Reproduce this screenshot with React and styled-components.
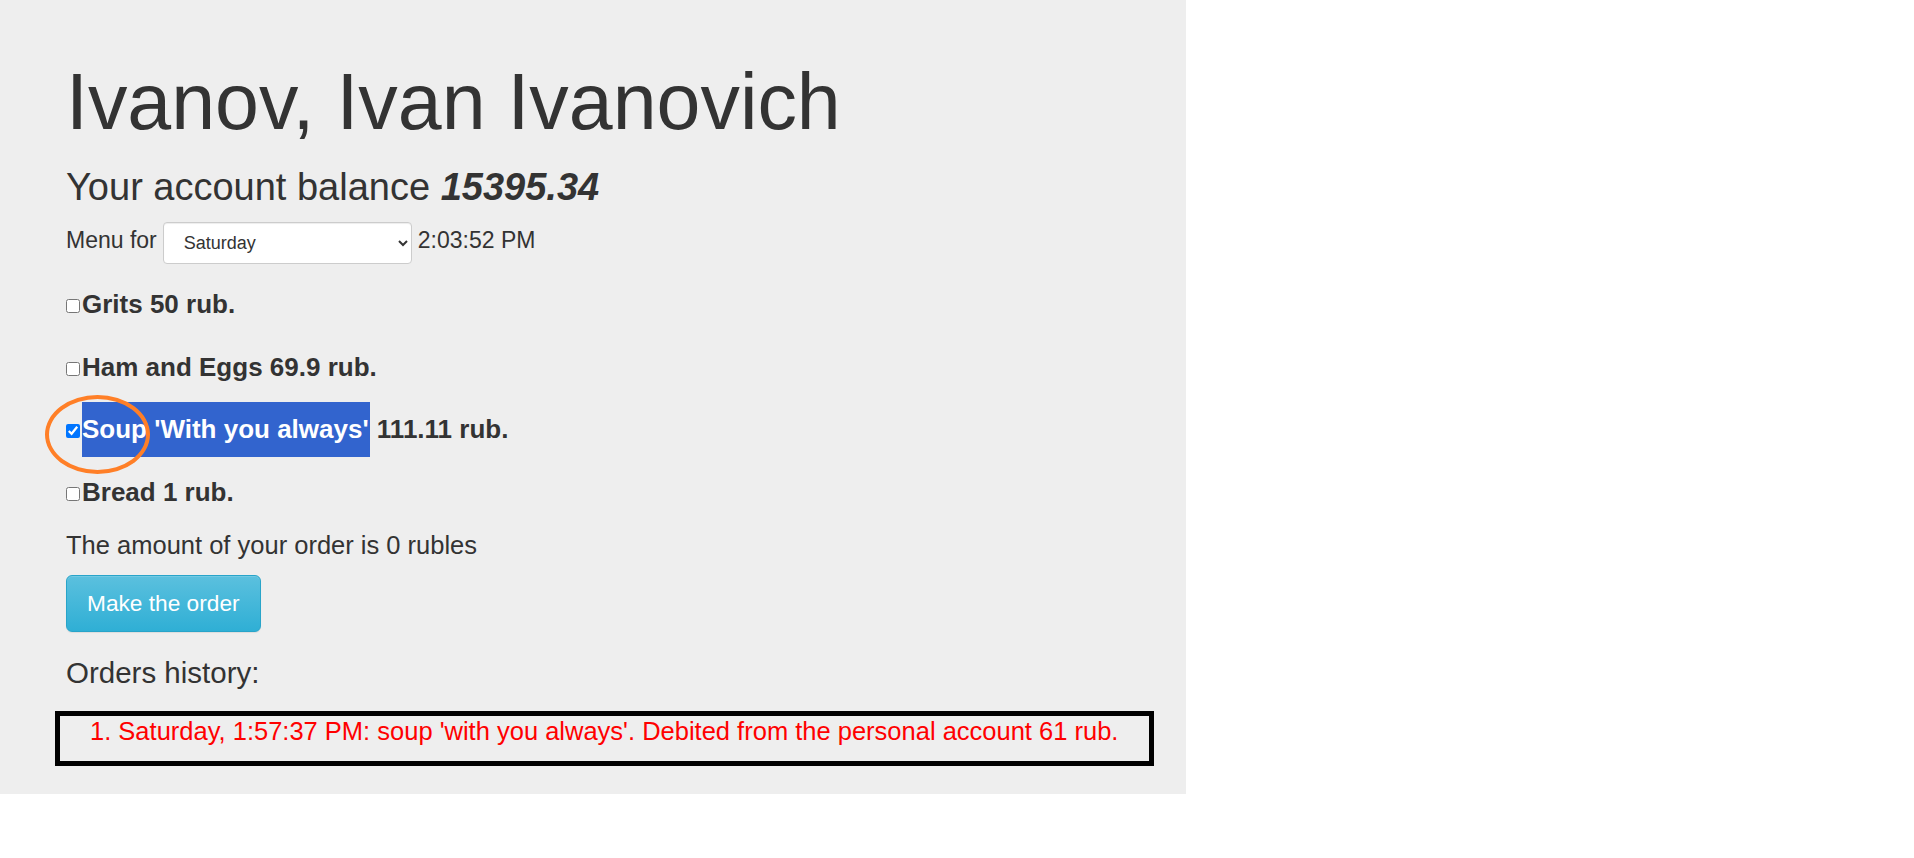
import styled, { createGlobalStyle } from 'styled-components';

const GlobalStyle = createGlobalStyle`
  html, body {
    margin: 0;
    padding: 0;
    background: #fff;
  }
  body {
    font-family: "Liberation Sans", Arial, Helvetica, sans-serif;
    color: #333;
  }
`;

const Page = styled.div`
  width: 1186px;
  min-height: 794px;
  box-sizing: border-box;
  background: #eee;
  padding: 59px 32px 28px 66px;
  display: flex;
  flex-direction: column;
`;

const Title = styled.h1`
  margin: 0;
  font-size: 78.9px;
  line-height: 86px;
  font-weight: 400;
`;

const Balance = styled.h3`
  margin: 21px 0 0;
  font-size: 38px;
  line-height: 42px;
  font-weight: 400;

  b {
    font-style: italic;
    font-weight: 700;
  }
`;

const MenuRow = styled.div`
  margin-top: 14px;
  display: flex;
  align-items: flex-start;
  font-size: 23px;
`;

const RowText = styled.span`
  margin-top: 3px;
  line-height: 30px;
  margin-left: ${p => p.$gap || 0}px;
`;

const DaySelect = styled.select`
  margin-left: 6px;
  width: 249px;
  height: 42px;
  box-sizing: border-box;
  padding: 0 6px 0 16px;
  font-family: "Liberation Sans", Arial, sans-serif;
  font-size: 18px;
  color: #333;
  background: #fff;
  border: 1px solid #ccc;
  border-radius: 4px;
  box-shadow: inset 0 1px 1px rgba(0, 0, 0, 0.075);
`;

const Items = styled.div`
  margin-top: 13px;
  display: flex;
  flex-direction: column;
`;

const Item = styled.div`
  position: relative;
  line-height: 55px;
  height: 55px;
  margin-bottom: 7.5px;
  font-size: 26px;
  font-weight: 700;
  white-space: nowrap;
`;

const Check = styled.input`
  width: 14px;
  height: 14px;
  margin: 0 2px 1px 0;
  vertical-align: baseline;
`;

const Selected = styled.span`
  display: inline-block;
  line-height: 55px;
  padding-right: 1px;
  background: #3264ce;
  color: #fff;
`;

// hand-drawn annotation ring over the checked item
const Circle = styled.span`
  position: absolute;
  left: -21px;
  top: -7px;
  width: 105px;
  height: 79px;
  box-sizing: border-box;
  border: 4px solid #ff7f27;
  border-radius: 50%;
  pointer-events: none;
`;

const Amount = styled.p`
  margin: 0;
  font-size: 25.5px;
  line-height: 36px;
`;

const OrderButton = styled.button`
  align-self: flex-start;
  margin-top: 12px;
  padding: 11px 20px;
  font-family: "Liberation Sans", Arial, sans-serif;
  font-size: 22.7px;
  line-height: 33px;
  color: #fff;
  background: linear-gradient(to bottom, #5bc0de 0%, #2fafd5 100%);
  border: 1px solid #28a4c9;
  border-radius: 6px;
  box-shadow: inset 0 1px 0 rgba(255, 255, 255, 0.15), 0 1px 1px rgba(0, 0, 0, 0.075);
  cursor: pointer;
`;

const HistoryTitle = styled.h4`
  margin: 25px 0 0;
  font-size: 29.5px;
  line-height: 32px;
  font-weight: 400;
`;

const History = styled.ol`
  margin: 22px 0 0 -11px;
  padding: 0 0 15px 30px;
  border: 5px solid #000;
  list-style: decimal inside;
  color: #f00;
  font-size: 25.5px;
  line-height: 30px;
`;

const days = ['Monday', 'Tuesday', 'Wednesday', 'Thursday', 'Friday', 'Saturday', 'Sunday'];

const menu = [
  { id: 1, name: 'Grits', price: '50' },
  { id: 2, name: 'Ham and Eggs', price: '69.9' },
  { id: 3, name: "Soup 'With you always'", price: '111.11', checked: true },
  { id: 4, name: 'Bread', price: '1' },
];

const App = () => (
  <>
    <GlobalStyle />
    <Page>
      <Title>Ivanov, Ivan Ivanovich</Title>
      <Balance>
        Your account balance <b>15395.34</b>
      </Balance>
      <MenuRow>
        <RowText>Menu for</RowText>
        <DaySelect defaultValue="Saturday">
          {days.map(d => (
            <option key={d} value={d}>{d}</option>
          ))}
        </DaySelect>
        <RowText $gap={6}>2:03:52 PM</RowText>
      </MenuRow>
      <Items>
        {menu.map(item => (
          <Item key={item.id}>
            <Check type="checkbox" defaultChecked={!!item.checked} />
            {item.checked ? (
              <>
                <Selected>{item.name}</Selected> {item.price} rub.
                <Circle />
              </>
            ) : (
              `${item.name} ${item.price} rub.`
            )}
          </Item>
        ))}
      </Items>
      <Amount>The amount of your order is 0 rubles</Amount>
      <OrderButton type="button">Make the order</OrderButton>
      <HistoryTitle>Orders history:</HistoryTitle>
      <History>
        <li>Saturday, 1:57:37 PM: soup 'with you always'. Debited from the personal account 61 rub.</li>
      </History>
    </Page>
  </>
);

export default App;
